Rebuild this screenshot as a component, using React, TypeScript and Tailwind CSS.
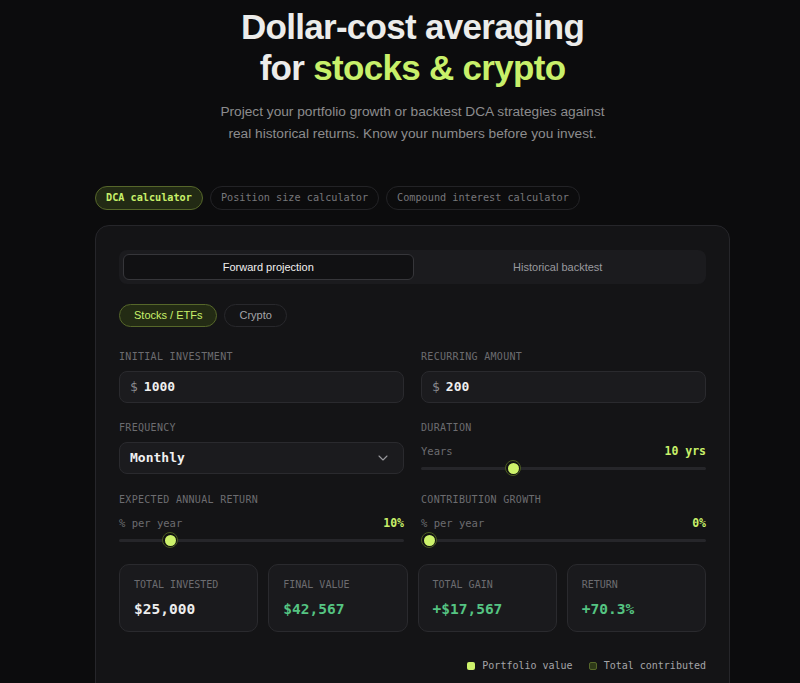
import { ChevronDown } from 'lucide-react'

const LIME = 'text-[#c8f06a]'

const TOOLS = ['DCA calculator', 'Position size calculator', 'Compound interest calculator']

const STATS = [
  { label: 'Total invested', value: '$25,000', tone: 'text-[#ededed]' },
  { label: 'Final value', value: '$42,567', tone: 'text-[#55c482]' },
  { label: 'Total gain', value: '+$17,567', tone: 'text-[#55c482]' },
  { label: 'Return', value: '+70.3%', tone: 'text-[#55c482]' },
]

function Label({ children }: { children: React.ReactNode }) {
  return (
    <div className="font-['DejaVu_Sans_Mono',monospace] text-[10px] uppercase tracking-[0.03em] text-[#6c6c70]">
      {children}
    </div>
  )
}

function MoneyInput({ value }: { value: string }) {
  return (
    <div className="mt-[7px] flex h-8 items-center gap-[6px] rounded-lg border border-[#2a2a2e] bg-[#1b1b1e] px-[10px] font-['DejaVu_Sans_Mono',monospace] text-[13px]">
      <span className="text-[#8a8a8e]">$</span>
      <span className="font-bold text-[#f0f0f0]">{value}</span>
    </div>
  )
}

function Slider({ unit, value, pct }: { unit: string; value: string; pct: number }) {
  return (
    <div className="mt-[8px]">
      <div className="flex items-center justify-between font-['DejaVu_Sans_Mono',monospace] leading-4">
        <span className="text-[10.5px] text-[#6c6c70]">{unit}</span>
        <span className={`text-[11.5px] font-bold ${LIME}`}>{value}</span>
      </div>
      <div className="relative mt-[1px] h-4">
        <div className="absolute left-0 right-0 top-[7px] h-[3px] rounded-full bg-[#26262a]" />
        <div
          className="absolute top-0 h-4 w-4 -translate-x-1/2 rounded-full border-[1.5px] border-[#4a5a22] bg-[#111113] p-[1.5px]"
          style={{ left: `calc(8px + (100% - 16px) * ${pct})` }}
        >
          <div className="h-full w-full rounded-full bg-[#cdf26b]" />
        </div>
      </div>
    </div>
  )
}

export default function App() {
  return (
    <div className="min-h-[683px] bg-[#0c0c0d] pl-[25px] pt-[6px] font-['Liberation_Sans',Arial,sans-serif]">
      <h1 className="text-center text-[35px] font-bold leading-[41px] tracking-[-0.02em] text-[#ececea]">
        Dollar-cost averaging
        <br />
        for <span className={LIME}>stocks &amp; crypto</span>
      </h1>
      <p className="mt-[13px] text-center text-[13.7px] leading-[22px] text-[#8c8c8e]">
        Project your portfolio growth or backtest DCA strategies against
        <br />
        real historical returns. Know your numbers before you invest.
      </p>

      <div className="mx-auto mt-[41px] w-[635px]">
        <div className="flex gap-[7px] font-['DejaVu_Sans_Mono',monospace] text-[10.2px]">
          {TOOLS.map((t, i) => (
            <div
              key={t}
              className={
                i === 0
                  ? `flex h-6 items-center rounded-full border border-[#56672a] bg-[#222a14] px-[10px] font-bold ${LIME}`
                  : 'flex h-6 items-center rounded-full border border-[#232326] px-[10px] text-[#77777b]'
              }
            >
              {t}
            </div>
          ))}
        </div>

        <div className="mt-[15px] rounded-[14px] border border-[#26262a] bg-[#141416] px-[23px] pb-6 pt-6">
          <div className="flex h-[34px] rounded-lg bg-[#1b1b1e] p-1 text-[11px]">
            <div className="flex flex-1 items-center justify-center rounded-md border border-[#36363a] bg-[#111113] text-[#f0f0f0]">
              Forward projection
            </div>
            <div className="flex flex-1 items-center justify-center text-[#9a9a9e]">Historical backtest</div>
          </div>

          <div className="mt-5 flex gap-[7px] text-[11px]">
            <div className={`flex h-[23px] items-center rounded-full border border-[#56672a] bg-[#232b14] px-[14px] ${LIME}`}>
              Stocks / ETFs
            </div>
            <div className="flex h-[23px] items-center rounded-full border border-[#28282c] px-[14px] text-[#a4a4a8]">
              Crypto
            </div>
          </div>

          <div className="mt-[22px] grid grid-cols-2 gap-x-[17px]">
            <div>
              <Label>Initial investment</Label>
              <MoneyInput value="1000" />
            </div>
            <div>
              <Label>Recurring amount</Label>
              <MoneyInput value="200" />
            </div>

            <div className="mt-[17px]">
              <Label>Frequency</Label>
              <div className="mt-[7px] flex h-8 items-center justify-between rounded-lg border border-[#2a2a2e] bg-[#1b1b1e] pl-[10px] pr-[12px] font-['DejaVu_Sans_Mono',monospace] text-[13px] font-bold text-[#f0f0f0]">
                Monthly
                <ChevronDown size={16} strokeWidth={1.6} className="text-[#9a9a9e]" />
              </div>
            </div>
            <div className="mt-[17px]">
              <Label>Duration</Label>
              <Slider unit="Years" value="10 yrs" pct={0.314} />
            </div>

            <div className="mt-[16px]">
              <Label>Expected annual return</Label>
              <Slider unit="% per year" value="10%" pct={0.16} />
            </div>
            <div className="mt-[16px]">
              <Label>Contribution growth</Label>
              <Slider unit="% per year" value="0%" pct={0} />
            </div>
          </div>

          <div className="mt-[16px] grid grid-cols-4 gap-[10px]">
            {STATS.map((s) => (
              <div key={s.label} className="h-[68px] rounded-[10px] border border-[#2a2a2e] bg-[#1a1a1d] px-[14px] pt-[12px]">
                <div className="font-['DejaVu_Sans_Mono',monospace] text-[10px] uppercase text-[#6c6c70]">
                  {s.label}
                </div>
                <div className={`mt-[7px] font-['DejaVu_Sans_Mono',monospace] text-[14.5px] font-bold ${s.tone}`}>
                  {s.value}
                </div>
              </div>
            ))}
          </div>

          <div className="mt-[26px] flex justify-end gap-[16px] font-['DejaVu_Sans_Mono',monospace] text-[10px] text-[#a4a4a8]">
            <div className="flex items-center gap-[7px]">
              <span className="h-2 w-2 rounded-[2px] bg-[#cdf26b]" />
              Portfolio value
            </div>
            <div className="flex items-center gap-[7px]">
              <span className="h-2 w-2 rounded-[2px] border border-[#56672a] bg-[#2e3a18]" />
              Total contributed
            </div>
          </div>
          <div className="h-[200px]" />
        </div>
      </div>
    </div>
  )
}
